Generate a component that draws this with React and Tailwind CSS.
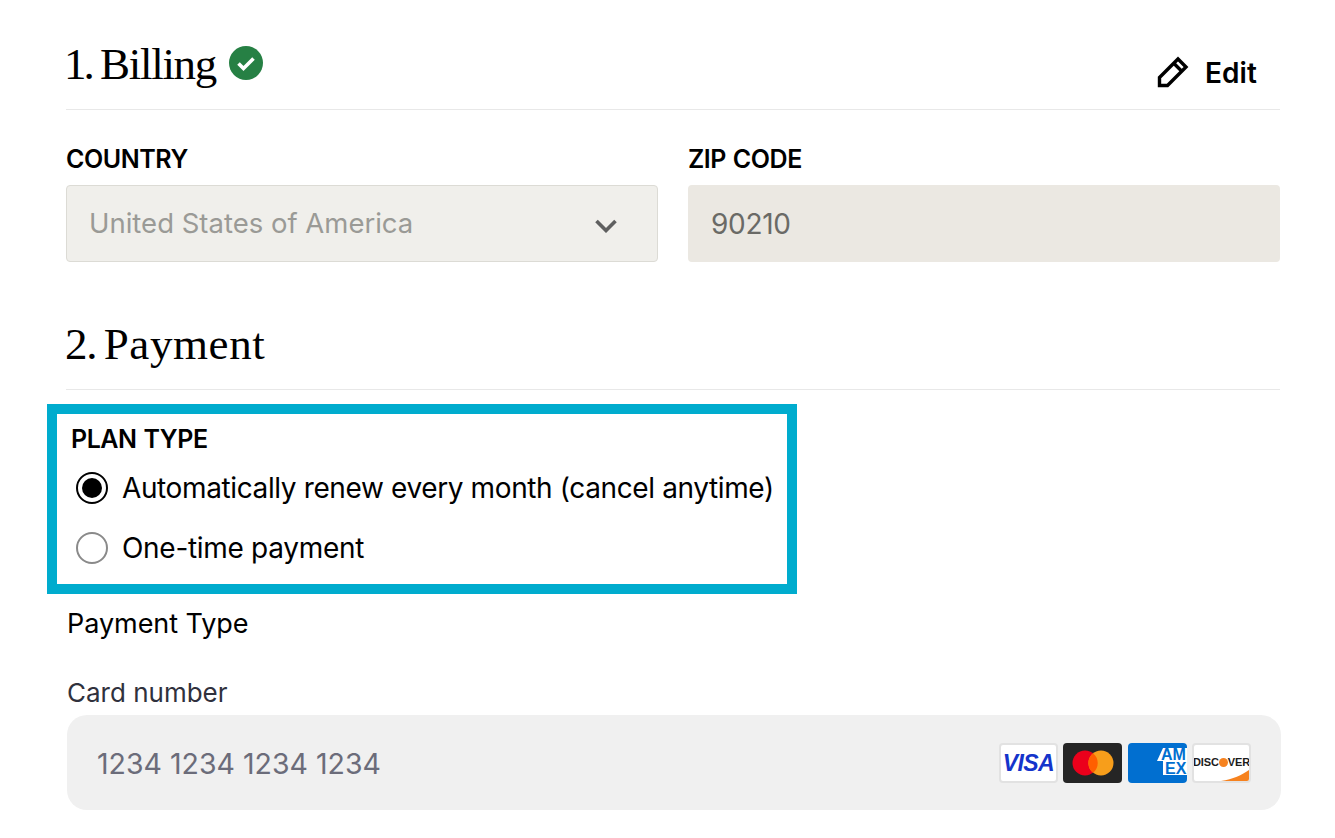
const serif = "font-['Liberation_Serif',serif]";
const sans = "font-['Inter',sans-serif]";

const Label = ({ children }) => (
  <div className={`${sans} text-[25px] leading-[30px] font-semibold tracking-[-0.45px] [word-spacing:1px] text-black`}>
    {children}
  </div>
);

const Radio = ({ checked }) => (
  <span
    className={`flex h-[32px] w-[32px] items-center justify-center rounded-full border-2 bg-white ${
      checked ? "border-black" : "border-[#8a8a8a]"
    }`}
  >
    {checked && <span className="h-[20px] w-[20px] rounded-full bg-black"></span>}
  </span>
);

const Cards = () => (
  <div className="flex items-center gap-[5.4px]">
    <div className="flex h-[40px] w-[59px] items-center justify-center rounded-[4px] border-2 border-[#e2e2e2] bg-white">
      <span className="mt-[2px] font-['Liberation_Sans',sans-serif] text-[23px] font-bold italic leading-none tracking-[-0.6px] text-[#1434cb]">
        VISA
      </span>
    </div>
    <div className="flex h-[40px] w-[59px] items-center justify-center rounded-[4px] bg-[#252525]">
      <svg width="50" height="28" viewBox="0 0 50 28">
        <circle cx="17" cy="14" r="12.5" fill="#eb001b" />
        <circle cx="33" cy="14" r="12.5" fill="#f79e1b" />
        <path d="M25 4.200a12.500 12.500 0 0 1 0 19.600a12.500 12.500 0 0 1 0-19.600z" fill="#ff5f00" />
      </svg>
    </div>
    <div className="h-[40px] w-[59px] overflow-hidden rounded-[4px] bg-[#016fd0]">
      <svg width="59" height="40" viewBox="0 0 59 40">
        <path d="M29 18L35 5H59V18z" fill="#fff" />
        <path d="M35 18H59V32H35z" fill="#fff" />
        <text fontFamily="'Liberation Sans',sans-serif" fontSize="16" fontWeight="700" fill="#016fd0">
          <tspan x="33" y="17">AM</tspan>
          <tspan x="37" y="31">EX</tspan>
        </text>
      </svg>
    </div>
    <div className="relative flex h-[40px] w-[59px] items-center justify-center overflow-hidden rounded-[4px] border-2 border-[#e2e2e2] bg-white font-['Liberation_Sans',sans-serif] text-[11px] font-bold leading-none tracking-[-0.15px] text-[#1c1c1c]">
      <svg className="absolute bottom-0 right-0" width="28" height="11" viewBox="0 0 28 11">
        <path d="M0 11C12 9 21 5 28 0V11z" fill="#f6821f" />
      </svg>
      <span className="relative flex items-center">
        DISC
        <span className="inline-block h-[9px] w-[9px] rounded-full bg-[#f6821f]"></span>
        VER
      </span>
    </div>
  </div>
);

const App = () => {
  return (
    <div className="h-[838px] w-full overflow-hidden bg-white pl-[66px] pr-[55px] text-black">
      <div className="flex h-[110px] items-start justify-between border-b border-[#e8e8e8]">
        <div className="mt-[37px] flex items-center gap-[13px]">
          <h1 className={`${serif} -ml-[2px] text-[45px] leading-[54px] font-normal tracking-[-1.3px] [word-spacing:-1.6px]`}>
            <span className="tracking-[-3px]">1.</span> Billing
          </h1>
          <svg width="34" height="34" viewBox="0 0 34 34" className="-mt-[2px]">
            <circle cx="17" cy="17" r="17" fill="#268044" />
            <path d="M9.500 17.500l5 5 10-10" fill="none" stroke="#fff" strokeWidth="3.6" />
          </svg>
        </div>
        <div className="mt-[56px] mr-[23px] flex items-center gap-[16px]">
          <svg width="32" height="32" viewBox="0 0 32 32" fill="none" stroke="#000" strokeWidth="3.4" className="-mt-[2px]">
            <path d="M2.500 29.500v-8L21 3l8 8-18.500 18.500z" />
            <path d="M17 7.500l7.500 7.500" />
          </svg>
          <span className={`${sans} text-[28px] leading-[34px] font-semibold tracking-[0.1px]`}>Edit</span>
        </div>
      </div>

      <div className="mt-[34px] grid grid-cols-2 gap-[30px]">
        <div>
          <Label>COUNTRY</Label>
          <div className="mt-[11px] flex h-[77px] items-center justify-between rounded-[4px] border border-[#dcdbd5] bg-[#f0efeb] pl-[22px] pr-[40px]">
            <span className={`${sans} mt-[1px] text-[27.5px] font-normal text-[#9a9a96]`}>United States of America</span>
            <svg width="22" height="14" viewBox="0 0 22 14" fill="none" stroke="#5f5f5f" strokeWidth="3.6" className="mt-[4px]">
              <path d="M1.500 2l9.500 9.500L20.500 2" />
            </svg>
          </div>
        </div>
        <div>
          <Label>ZIP CODE</Label>
          <div className="mt-[11px] flex h-[77px] items-center rounded-[4px] bg-[#ebe8e2] pl-[23px]">
            <span className={`${sans} text-[28px] font-normal tracking-[-0.3px] text-[#6a6a66]`}>90210</span>
          </div>
        </div>
      </div>

      <div className="mt-[55px] h-[73px] border-b border-[#e8e8e8]">
        <h2 className={`${serif} -ml-[1px] text-[45px] leading-[54px] font-normal tracking-[-0.1px] [word-spacing:-3.6px]`}>
          <span className="tracking-[-1.3px]">2.</span> <span className="tracking-[0.6px]">Payment</span>
        </h2>
      </div>

      <div className="-ml-[19px] mt-[14px] h-[190px] w-[750px] border-[10px] border-[#00acce] pl-[14px] pt-[10px]">
        <Label>PLAN TYPE</Label>
        <div className={`${sans} mt-[18px] flex items-center gap-[14px] pl-[5px] text-[28px] leading-[32px]`}>
          <Radio checked />
          <span className="tracking-[-0.38px]">Automatically renew every month (cancel anytime)</span>
        </div>
        <div className={`${sans} mt-[28px] flex items-center gap-[14px] pl-[5px] text-[28px] leading-[32px]`}>
          <Radio />
          <span className="tracking-[-0.3px]">One-time payment</span>
        </div>
      </div>

      <div className={`${sans} mt-[13px] pl-[1px] text-[27px] leading-[34px] tracking-[-0.05px] text-black`}>Payment Type</div>
      <div className={`${sans} mt-[37px] pl-[1px] text-[26px] leading-[30px] text-[#30313d]`}>Card number</div>
      <div className="ml-[1px] mt-[7px] flex h-[95px] w-[1214px] items-center justify-between rounded-[20px] bg-[#f0f0f0] pl-[30px] pr-[30px]">
        <span className={`${sans} pt-[4px] text-[28.5px] text-[#6b6c7a]`}>1234 1234 1234 1234</span>
        <Cards />
      </div>
    </div>
  );
};

export default App;
